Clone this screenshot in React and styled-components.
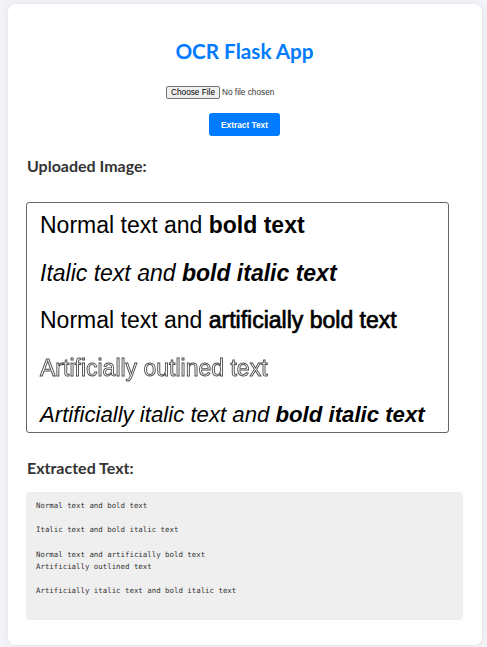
import React from "react";
import styled, { createGlobalStyle } from "styled-components";

const GlobalStyle = createGlobalStyle`
  html, body {
    margin: 0;
    padding: 0;
    background: #f4f4f8;
  }
  body {
    padding: 4px 5px 3px 8px;
    font-family: Lato, "Noto Sans", sans-serif;
  }
`;

const Card = styled.div`
  background: #ffffff;
  border-radius: 8px;
  box-shadow: 0 0 8px rgba(0, 0, 0, 0.08);
  padding: 19px 19px 25px 18px;
  display: flex;
  flex-direction: column;
`;

const Title = styled.h1`
  margin: 18px 0 0;
  text-align: center;
  color: #007bff;
  font-size: 20.7px;
  line-height: 21px;
  font-weight: 700;
`;

const Form = styled.form`
  display: flex;
  flex-direction: column;
  align-items: center;
`;

const FileRow = styled.div`
  margin-top: 23px;
  height: 14px;
  display: flex;
  justify-content: center;
  align-items: center;
`;

const FileInput = styled.input`
  width: 157px;
  font-family: "Liberation Sans", Arial, sans-serif;
  font-size: 8.25px;
  color: #333;
  &::file-selector-button {
    font-family: "Liberation Sans", Arial, sans-serif;
    font-size: 8.25px;
    height: 13px;
    padding: 0 4px;
    margin-right: 2px;
    border: 1px solid #767676;
    border-radius: 2px;
    background: #efefef;
    color: #000;
  }
`;

const SubmitButton = styled.button`
  margin-top: 14px;
  height: 23px;
  padding: 0 12px;
  border: none;
  border-radius: 3px;
  background: #007bff;
  color: #ffffff;
  font-family: "Liberation Sans", Arial, sans-serif;
  font-size: 8.3px;
  font-weight: 700;
`;

const SectionTitle = styled.h2`
  margin: ${(p) => p.$top}px 0 0 1px;
  color: #333333;
  font-size: 16px;
  line-height: 20px;
  font-weight: 700;
`;

const ImageFrame = styled.div`
  margin-top: 26px;
  width: 423px;
  height: 231px;
  box-sizing: border-box;
  border: 1px solid #666;
  border-radius: 3px;
  overflow: hidden;
  padding: 0 0 0 13px;
  display: flex;
  flex-direction: column;
  gap: 3.5px;
  font-family: "Liberation Sans", Arial, sans-serif;
  color: #000;
  background: #fff;
`;

const SampleLine = styled.div`
  font-size: ${(p) => p.$size || 23}px;
  line-height: 44px;
  height: 44px;
  white-space: nowrap;
  font-style: ${(p) => (p.$italic ? "italic" : "normal")};
`;

const Bold = styled.b`
  font-weight: 700;
`;

const FakeBold = styled.span`
  -webkit-text-stroke: 0.7px #000;
`;

const Outlined = styled.span`
  display: inline-block;
  color: #ffffff;
  -webkit-text-stroke: 0.9px #4a4a4a;
  opacity: 0.99;
  transform: translateZ(0);
`;

const Output = styled.pre`
  margin: 14px 0 0;
  padding: 8px 10px 10px;
  background: #efefef;
  border-radius: 4px;
  font-family: "DejaVu Sans Mono", "Liberation Mono", monospace;
  font-size: 7.4px;
  line-height: 12.2px;
  color: #333;
  white-space: pre-wrap;
`;

const extracted =
  "Normal text and bold text\n\nItalic text and bold italic text\n\nNormal text and artificially bold text\nArtificially outlined text\n\nArtificially italic text and bold italic text\n\n";

export default function App() {
  return (
    <>
      <GlobalStyle />
      <Card>
        <Title>OCR Flask App</Title>
        <Form onSubmit={(e) => e.preventDefault()}>
          <FileRow>
            <FileInput type="file" name="file" />
          </FileRow>
          <SubmitButton type="submit">Extract Text</SubmitButton>
        </Form>

        <SectionTitle $top={20}>Uploaded Image:</SectionTitle>
        <ImageFrame>
          <SampleLine>
            Normal text and <Bold>bold text</Bold>
          </SampleLine>
          <SampleLine $italic>
            Italic text and <Bold>bold italic text</Bold>
          </SampleLine>
          <SampleLine>
            Normal text and <FakeBold>artificially bold text</FakeBold>
          </SampleLine>
          <SampleLine>
            <Outlined>Artificially outlined text</Outlined>
          </SampleLine>
          <SampleLine $italic $size={22.2}>
            Artificially italic text and <Bold>bold italic text</Bold>
          </SampleLine>
        </ImageFrame>

        <SectionTitle $top={25}>Extracted Text:</SectionTitle>
        <Output>{extracted}</Output>
      </Card>
    </>
  );
}
